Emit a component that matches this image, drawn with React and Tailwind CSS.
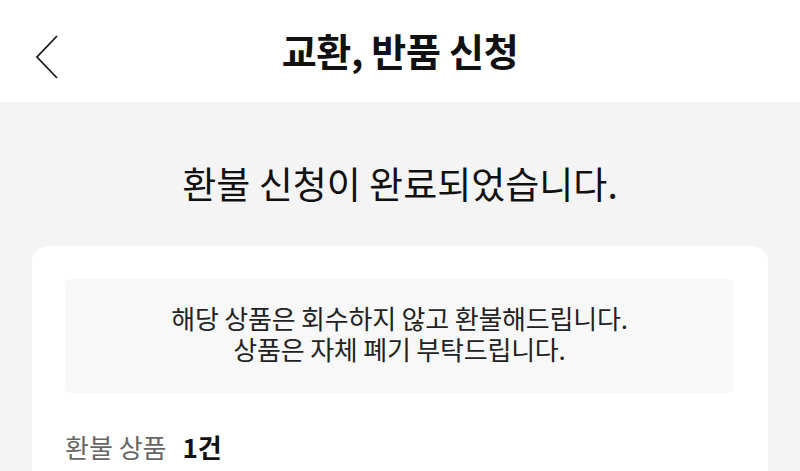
import React from 'react'

const font = { fontFamily: '"Noto Sans CJK KR", "Noto Sans", sans-serif' }

const BackIcon = () => (
    <svg width="26" height="46" viewBox="0 0 26 46" fill="none">
        <polyline points="22,2 2,23 22,44" stroke="#1a1a1a" strokeWidth="1.8" strokeLinejoin="miter" />
    </svg>
)

const App = () => {
    return (
        <div className="min-h-screen bg-[#f4f4f4]" style={font}>
            <header className="relative h-[102px] bg-white flex items-center justify-center">
                <button className="absolute left-[35px] top-[34px]">
                    <BackIcon />
                </button>
                <h1 className="text-[38px] leading-[46px] font-bold tracking-[-0.3px] text-[#111] -mt-[2px]">
                    교환, 반품 신청
                </h1>
            </header>

            <main className="pt-[59px]">
                <p className="text-center text-[37px] leading-[44px] text-[#111]">
                    환불 신청이 완료되었습니다.
                </p>

                <div className="mx-[32px] mt-[41px] bg-white rounded-2xl pt-[33px] pl-[33px] pr-[34px] pb-10">
                    <div className="bg-[#f8f8f8] rounded-md pt-[23px] pb-[29px] text-center text-[26px] leading-[31px] tracking-[-0.2px] text-[#222]">
                        <p>해당 상품은 회수하지 않고 환불해드립니다.</p>
                        <p>상품은 자체 폐기 부탁드립니다.</p>
                    </div>

                    <div className="mt-[39px] flex items-center gap-[16px] text-[26px] leading-[30px]">
                        <span className="text-[#666]">환불 상품</span>
                        <span className="font-bold text-[#111]">1건</span>
                    </div>
                </div>
            </main>
        </div>
    )
}

export default App
